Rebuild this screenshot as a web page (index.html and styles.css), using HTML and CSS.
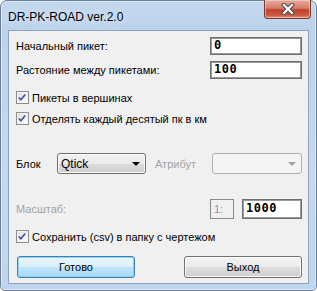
FILE: index.html
```html
<!DOCTYPE html>
<html lang="ru">
<head>
    <meta charset="utf-8">
    <title>DR-PK-ROAD ver.2.0</title>
    <link rel="stylesheet" href="styles.css">
</head>
<body>
    <div class="window">
        <div class="titlebar">
            <span class="title">DR-PK-ROAD ver.2.0</span>
            <div class="close">
                <svg width="18" height="12" viewBox="0 0 18 12">
                    <path d="M5 2 L13 10 M13 2 L5 10" stroke="#4a4a4a" stroke-width="4.2" stroke-linecap="square"/>
                    <path d="M5 2 L13 10 M13 2 L5 10" stroke="#ffffff" stroke-width="2.2" stroke-linecap="square"/>
                </svg>
            </div>
        </div>
        <div class="client">
            <div class="row row-field">
                <span class="label">Начальный пикет:</span>
                <div class="field">0</div>
            </div>
            <div class="row row-field second">
                <span class="label">Растояние между пикетами:</span>
                <div class="field">100</div>
            </div>

            <div class="row check first-check">
                <span class="box"><svg width="13" height="13" viewBox="0 0 13 13"><path d="M3 6.5 L5.3 9 L10 3.2" fill="none" stroke="#3b56a0" stroke-width="1.8"/></svg></span>
                <span class="label">Пикеты в вершинах</span>
            </div>
            <div class="row check second-check">
                <span class="box"><svg width="13" height="13" viewBox="0 0 13 13"><path d="M3 6.5 L5.3 9 L10 3.2" fill="none" stroke="#3b56a0" stroke-width="1.8"/></svg></span>
                <span class="label">Отделять каждый десятый пк в км</span>
            </div>

            <div class="row row-block">
                <span class="label block-label">Блок</span>
                <div class="combo">
                    <span>Qtick</span>
                    <span class="arrow"></span>
                </div>
                <span class="label disabled attr-label">Атрибут</span>
                <div class="combo combo-off">
                    <span></span>
                    <span class="arrow"></span>
                </div>
            </div>

            <div class="row row-scale">
                <span class="label disabled">Масштаб:</span>
                <div class="scale">
                    <div class="ratio">1:</div>
                    <div class="field field-scale">1000</div>
                </div>
            </div>

            <div class="row check third-check">
                <span class="box"><svg width="13" height="13" viewBox="0 0 13 13"><path d="M3 6.5 L5.3 9 L10 3.2" fill="none" stroke="#3b56a0" stroke-width="1.8"/></svg></span>
                <span class="label">Сохранить (csv) в папку с чертежом</span>
            </div>

            <div class="row buttons">
                <button class="btn btn-default">Готово</button>
                <button class="btn">Выход</button>
            </div>
        </div>
    </div>
</body>
</html>
```

FILE: styles.css
```css
body {
    margin: 0;
    background: #ffffff;
    font-family: "Liberation Sans", Arial, sans-serif;
    font-size: 11px;
}

.window {
    width: 317px;
    height: 291px;
    box-sizing: border-box;
    border: 1px solid #6d7f96;
    border-radius: 7px 7px 5px 5px;
    background: linear-gradient(#c3d8ef, #bcd3ec 30px, #c4d9f0 60%, #bfd5ee);
    box-shadow: inset 0 0 0 1px #dceaf8;
}

.titlebar {
    height: 29px;
    display: flex;
    align-items: flex-start;
    justify-content: space-between;
}

.title {
    margin: 9px 0 0 7px;
    font-size: 12px;
    color: #000;
    text-shadow: 0 0 6px #eef5fd;
}

.close {
    width: 47px;
    height: 19px;
    margin-right: 5px;
    margin-top: -1px;
    box-sizing: border-box;
    border: 1px solid #7a362b;
    border-top: 0;
    border-radius: 0 0 4px 4px;
    background: linear-gradient(#e6ada0, #d77c69 45%, #c0412b 55%, #cb5a43 85%, #e0927d);
    box-shadow: inset 0 0 0 1px rgba(255, 220, 210, 0.55);
    display: flex;
    align-items: center;
    justify-content: center;
}

.client {
    margin: 0 7px;
    height: 254px;
    box-sizing: border-box;
    border: 1px solid #8ea3bd;
    background: #f0f0f0;
    padding: 6px 6px 0 7px;
}

.row {
    display: flex;
    align-items: center;
}

.row-field {
    height: 18px;
    justify-content: space-between;
}

.row-field.second {
    margin-top: 6px;
}

.label {
    color: #000;
    white-space: nowrap;
}

.label.disabled {
    color: #a3a3a3;
}

.field {
    width: 92px;
    height: 18px;
    box-sizing: border-box;
    border: 1px solid #6f6f6f;
    box-shadow: inset 0 0 0 1px #9a9a9a;
    background: #fff;
    font-family: "DejaVu Sans Mono", monospace;
    font-weight: bold;
    font-size: 12px;
    line-height: 15px;
    padding-left: 3px;
    letter-spacing: 0.5px;
}

.check {
    height: 15px;
}

.first-check {
    margin-top: 11px;
}

.second-check {
    margin-top: 6px;
}

.third-check {
    margin-top: 10px;
}

.box {
    width: 13px;
    height: 13px;
    box-sizing: border-box;
    border: 1px solid #8e8f8f;
    background: linear-gradient(135deg, #dcdcdc, #f4f4f4 60%, #ffffff);
    box-shadow: inset 0 0 0 1px #f4f4f4;
    margin-right: 3px;
    display: flex;
}

.box svg {
    margin: -1px 0 0 -1px;
}

.row-block {
    margin-top: 27px;
    height: 21px;
}

.block-label {
    width: 41px;
}

.combo {
    width: 89px;
    height: 21px;
    box-sizing: border-box;
    border: 1px solid #707070;
    border-radius: 3px;
    background: linear-gradient(#f2f2f2, #ebebeb 50%, #dddddd 51%, #cfcfcf);
    box-shadow: inset 0 0 0 1px #fbfbfb;
    display: flex;
    align-items: center;
    justify-content: space-between;
    padding: 0 5px 0 3px;
    font-size: 12px;
}

.arrow {
    width: 0;
    height: 0;
    border-left: 4px solid transparent;
    border-right: 4px solid transparent;
    border-top: 4px solid #000;
}

.attr-label {
    margin-left: 9px;
}

.combo-off {
    margin-left: auto;
    width: 90px;
    border-color: #adb2b5;
    background: #f4f4f4;
    box-shadow: none;
}

.combo-off .arrow {
    border-top-color: #a0a0a0;
}

.row-scale {
    margin-top: 25px;
    height: 20px;
    justify-content: space-between;
}

.scale {
    display: flex;
    gap: 8px;
}

.ratio {
    width: 24px;
    height: 20px;
    box-sizing: border-box;
    border: 1px solid #8a8a8a;
    background: #f0f0f0;
    color: #9c8aa8;
    padding-left: 3px;
    line-height: 18px;
}

.field-scale {
    width: 60px;
    height: 20px;
    line-height: 17px;
}

.buttons {
    margin-top: 12px;
    justify-content: space-between;
    padding: 0 0 0 1px;
}

.btn {
    width: 118px;
    height: 22px;
    box-sizing: border-box;
    border: 1px solid #707070;
    border-radius: 3px;
    background: linear-gradient(#f2f2f2, #ebebeb 50%, #dddddd 51%, #cfcfcf);
    box-shadow: inset 0 0 0 1px #fcfcfc;
    font-family: "Liberation Sans", Arial, sans-serif;
    font-size: 11px;
    color: #000;
    padding: 0;
}

.btn-default {
    border-color: #3c7fb1;
    background: linear-gradient(#eaf6fd, #d9f0fc 50%, #bee6fd 51%, #a7d9f5);
    box-shadow: inset 0 0 0 1px #8ad4f4;
}
```
